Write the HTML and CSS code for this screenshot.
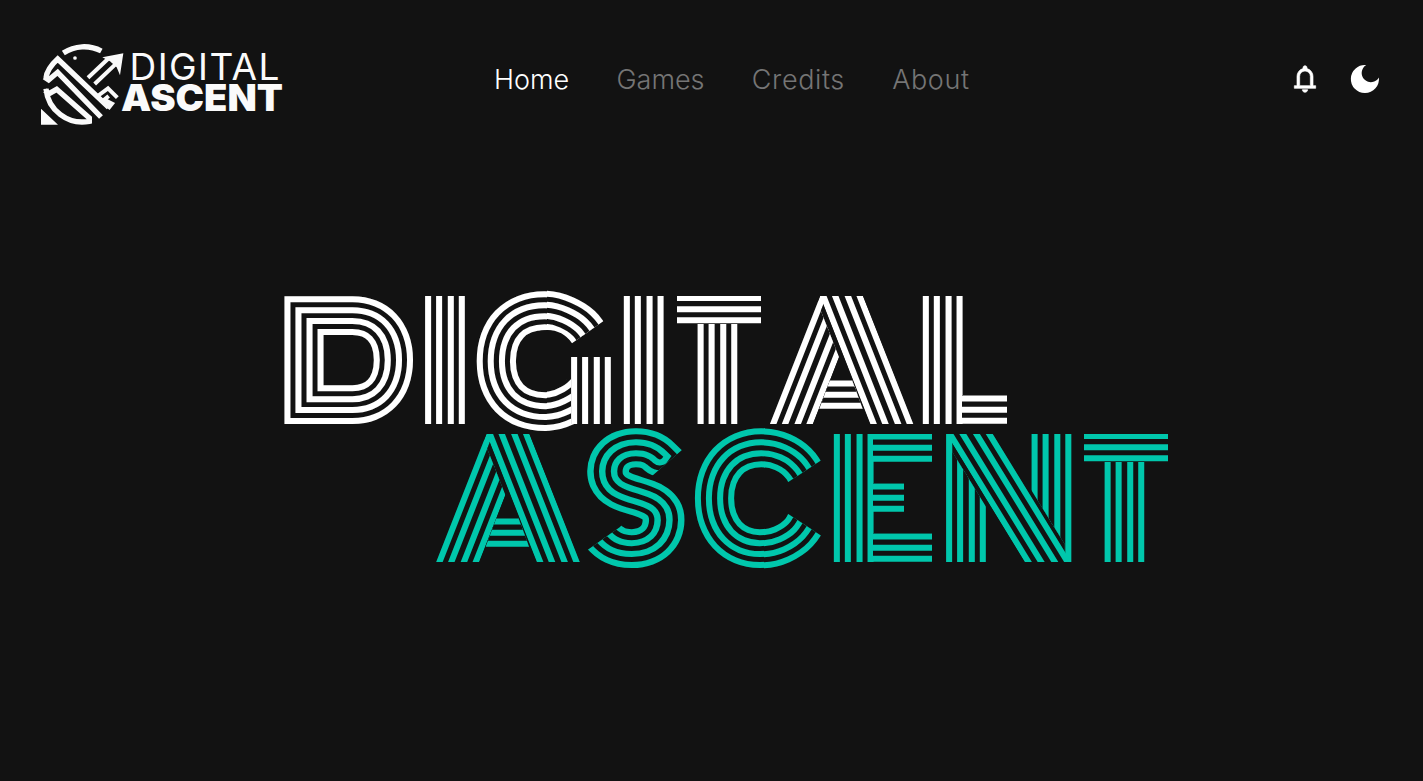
FILE: index.html
```html
<!DOCTYPE html>
<html lang="en">
<head>
<meta charset="utf-8">
<title>Digital Ascent</title>
<link rel="stylesheet" href="styles.css">
</head>
<body>
<header class="header">
  <a class="brand">
    <svg class="logo" viewBox="40 40 244 88" width="244" height="88">
      <g transform="translate(30 34) scale(.33333)">
        <g class="bird">
          <path d="M100 57A112 112 0 0 1 214 51"/>
          <path d="M48 132Q51 104 83 75L236 220"/>
          <path d="M43 129L56 138L83 115L213 249"/>
          <path d="M48 164A110 110 0 0 0 178 262L178 252L80 166L57 179L45 169"/>
          <path class="key" d="M199 189L234 163L262 191M236 186L223 197L246 209L234 224"/>
          <path class="key" d="M174 131L236 73M194 150L256 91"/>
        </g>
        <path class="solid" d="M280 58L217 70L240 82L260 100L270 124ZM33 224V272H84Z"/>
        <circle class="solid" cx="135" cy="72" r="5.5"/>
      </g>
      <text class="logo-light" x="129.500" y="79.500" textLength="150">DIGITAL</text>
      <text class="logo-bold" x="121" y="110.500" textLength="162" lengthAdjust="spacingAndGlyphs">ASCENT</text>
    </svg>
  </a>
  <nav class="nav">
    <a class="link active">Home</a>
    <a class="link">Games</a>
    <a class="link wide">Credits</a>
    <a class="link wide">About</a>
  </nav>
  <div class="actions">
    <svg class="icon bell" viewBox="0 0 24 24"><path d="M4 19v-2h2v-7q0-2.075 1.250-3.688T10.500 4.200v-.7q0-.625.438-1.062T12 2t1.063.438T13.500 3.500v.7q2 .5 3.250 2.113T18 10v7h2v2zm8 3q-.825 0-1.412-.587T10 20h4q0 .825-.587 1.413T12 22m-4-5h8v-7q0-1.650-1.175-2.825T12 6T9.175 7.175T8 10z"/></svg>
    <svg class="icon" viewBox="0 0 24 24"><path d="M12 22.500A10.500 10.500 0 1 1 12.900 1.550A6.900 6.900 0 1 0 22.450 10.800A10.500 10.500 0 0 1 12 22.500Z"/></svg>
  </div>
</header>
<main class="hero">
  <svg class="title" viewBox="0 160 1423 621">
    <defs>
      <text id="digital"><tspan class="d" x="288.300" y="404.500">D</tspan><tspan class="i" x="422.800" y="425">I</tspan><tspan class="round" x="485.700" y="411">G</tspan><tspan class="i" x="621.600" y="425">I</tspan><tspan class="t" x="667.800" y="424.500">T</tspan><tspan class="a" x="783" y="425">A</tspan><tspan class="l" x="922" y="415.500">L</tspan></text>
      <text id="ascent"><tspan class="a" x="449" y="563">A</tspan><tspan class="round" x="597" y="548">S</tspan><tspan class="round" x="704" y="548">C</tspan><tspan class="l" x="834" y="553.500">E</tspan><tspan class="n" x="945" y="560">N</tspan><tspan class="t" x="1074.800" y="562.500">T</tspan></text>
      <g id="top">
        <use href="#digital" class="w4"/><use href="#digital" class="w3"/><use href="#digital" class="w2"/><use href="#digital" class="w1"/>
      </g>
      <g id="low">
        <use href="#ascent" class="w4"/><use href="#ascent" class="w3"/><use href="#ascent" class="w2"/><use href="#ascent" class="w1"/>
      </g>
      <clipPath id="top-plain"><path d="M280 290H333V430H280ZM424 296H466V424H424ZM684 324H750V424H684Z"/></clipPath>
      <clipPath id="i-clip"><path d="M622 296H666V424H622Z"/></clipPath>
      <clipPath id="d-bridge"><path d="M333 290H342V430H333Z"/></clipPath>
      <clipPath id="d-bowl"><path d="M342 290H415V430H342Z"/></clipPath>
      <clipPath id="g-left"><path d="M470 285H547V330A30.500 30.500 0 0 0 547 391V435H470Z"/></clipPath>
      <clipPath id="g-top"><path d="M547 285H610V316.500L572 343.200A30.500 30.500 0 0 0 547 330Z"/></clipPath>
      <clipPath id="g-bottom"><path d="M547 388L571 378V424H577V435H547Z"/></clipPath>
      <clipPath id="g-stem"><path d="M571 357H612V424H571Z"/></clipPath>
      <clipPath id="t-bar"><path d="M677 296H761V324H677Z"/></clipPath>
      <clipPath id="a-right"><path d="M820 296H863L914 424H870Z"/></clipPath>
      <clipPath id="a-left"><path d="M820 296H826.600L776 424H769ZM769 424L815 296L839 357L813 424Z"/></clipPath>
      <clipPath id="a-bar"><path d="M830 380H852L863 409.500H819Z"/></clipPath>
      <clipPath id="l-stem"><path d="M921 296H963V424H921Z"/></clipPath>
      <clipPath id="l-arm"><path d="M962 395H1007V424H962Z"/></clipPath>
      <clipPath id="s-clip"><path d="M586 425H690V443L652 476L668 480L690 484V572H586V551L620 527L624 522L600 512L586 505Z"/></clipPath>
      <clipPath id="c-left"><path d="M692 425H765V572H692Z"/></clipPath>
      <clipPath id="c-top"><path d="M764 424H830V454.500L764 498Z"/></clipPath>
      <clipPath id="c-bottom"><path d="M764 572H830V541.500L764 498Z"/></clipPath>
      <clipPath id="e-stem"><path d="M833 434H874V562H833Z"/></clipPath>
      <clipPath id="e-top"><path d="M873 434H932V463H873Z"/></clipPath>
      <clipPath id="e-mid"><path d="M873 483.500H904V513H873Z"/></clipPath>
      <clipPath id="e-low"><path d="M873 533.500H932V562H873Z"/></clipPath>
      <clipPath id="n-diag"><path d="M946.500 434H993.500L1072 562H1024.500Z"/></clipPath>
      <clipPath id="n-left"><path d="M945 434H952.600V562H945ZM945 440L988 510V562H945Z"/></clipPath>
      <clipPath id="n-right"><path d="M1064.800 434H1072V562H1064.800ZM1030 434H1072V556L1030 488Z"/></clipPath>
      <clipPath id="t2-bar"><path d="M1084 434H1168V462H1084Z"/></clipPath>
      <clipPath id="t2-stem"><path d="M1090 462H1160V562H1090Z"/></clipPath>
      <g id="letter-a">
        <g clip-path="url(#a-left)"><use href="#top" transform="matrix(1.080 0 -.393 1 477.300 0)"/></g>
        <g clip-path="url(#a-right)"><use href="#top" transform="matrix(1.080 0 .393 1 244.700 0)"/></g>
        <g clip-path="url(#a-bar)"><use href="#top" transform="matrix(2.200 0 0 1 -670 85.500)"/></g>
      </g>
    </defs>
    <g class="white">
      <g clip-path="url(#top-plain)"><use href="#top"/></g>
      <g clip-path="url(#i-clip)"><use href="#top" x="198.800"/></g>
      <g clip-path="url(#d-bridge)"><use href="#top" x="9"/></g>
      <g clip-path="url(#d-bowl)"><use href="#top" x="17"/></g>
      <g clip-path="url(#g-left)"><use href="#top"/></g>
      <g clip-path="url(#g-top)"><use href="#top" transform="translate(1 .800) rotate(24 547 360.500)"/></g>
      <g clip-path="url(#g-bottom)"><use href="#top" transform="translate(0 -2) rotate(-30 547 360.500)"/></g>
      <g clip-path="url(#g-stem)"><use href="#top" x="146"/></g>
      <g clip-path="url(#t-bar)"><use href="#top" transform="matrix(4 0 0 1 -2027 0)"/></g>
      <use href="#letter-a"/>
      <g clip-path="url(#l-stem)"><use href="#top" x="497.700"/></g>
      <g clip-path="url(#l-arm)"><use href="#top" transform="matrix(3 0 0 1 -1066 100.500)"/></g>
    </g>
    <g class="teal">
      <use href="#letter-a" x="-333.600" y="138"/>
      <g clip-path="url(#s-clip)"><use href="#low" transform="matrix(1.070 0 0 1 -45.100 0)"/></g>
      <g clip-path="url(#c-left)"><use href="#low"/></g>
      <g clip-path="url(#c-top)"><use href="#low" transform="translate(1 1.200) rotate(24 764.500 498)"/></g>
      <g clip-path="url(#c-bottom)"><use href="#low" transform="translate(1 -1.500) rotate(-24 764.500 498)"/></g>
      <g clip-path="url(#e-stem)"><use href="#top" x="408.700" y="138"/></g>
      <g clip-path="url(#e-top)"><use href="#top" transform="matrix(3 0 0 1 -1155 138.500)"/></g>
      <g clip-path="url(#e-mid)"><use href="#top" transform="matrix(3 0 0 1 -1155 188.500)"/></g>
      <g clip-path="url(#e-low)"><use href="#top" transform="matrix(3 0 0 1 -1155 238.500)"/></g>
      <g clip-path="url(#n-left)"><use href="#top" x="521" y="138"/></g>
      <g clip-path="url(#n-right)"><use href="#top" x="606.500" y="138"/></g>
      <g clip-path="url(#n-diag)"><use href="#top" transform="matrix(1.165 0 .612 1 270.100 138)"/></g>
      <g clip-path="url(#t2-bar)"><use href="#top" transform="matrix(4 0 0 1 -1620 138)"/></g>
      <g clip-path="url(#t2-stem)"><use href="#low"/></g>
    </g>
  </svg>
</main>
</body>
</html>
```
FILE: styles.css
```css
body {
  margin: 0;
  height: 781px;
  overflow: hidden;
  display: flex;
  flex-direction: column;
  background: #121212;
  color: #fff;
  font-family: Inter, "Liberation Sans", sans-serif;
}
.header {
  box-sizing: border-box;
  height: 160px;
  padding: 0 42px 0 40px;
  display: grid;
  grid-template-columns: 454px 1fr auto;
}
.brand { padding-top: 40px; }
.logo { display: block; }
.bird { fill: none; stroke: #fafafa; stroke-width: 16; }
.key { stroke-width: 12; }
.solid { fill: #fafafa; }
.logo-light { fill: #fafafa; font-size: 37px; font-weight: 400; }
.logo-bold { fill: #fafafa; font-size: 36.500px; font-weight: 900; }
.nav { display: flex; gap: 47.300px; padding-top: 63px; }
.link { font-size: 27px; line-height: 34px; font-weight: 350; color: #757575; }
.active { color: #fff; }
.wide { letter-spacing: .6px; }
.actions { display: flex; gap: 28px; padding-top: 63px; }
.icon { width: 32px; height: 32px; fill: #fff; }
.bell { stroke: #fff; stroke-width: .5; }
.hero { flex: 1; }
.title {
  display: block;
  width: 1423px;
  height: 621px;
  font-family: Lato, sans-serif;
  font-weight: 100;
}
.white { --ink: #fff; }
.teal { --ink: #00c7ac; }

/* Concentric strokes, widest first, alternate ink and background. */
.w4 { --w: 37.500px; fill: var(--ink); stroke: var(--ink); }
.w3 { --w: 25.500px; fill: #121212; stroke: #121212; }
.w2 { --w: 15.500px; fill: var(--ink); stroke: var(--ink); }
.w1 { --w: 3.500px; fill: #121212; stroke: #121212; }
tspan { stroke-width: var(--w); stroke-miterlimit: 4; }
.d { font-size: 129px; }
.i { font-size: 182px; }
.round { font-size: 142px; }
.t { font-size: 174px; }
.l { font-size: 162px; }
.a { font-size: 182px; }
.n { font-size: 180px; }
```
